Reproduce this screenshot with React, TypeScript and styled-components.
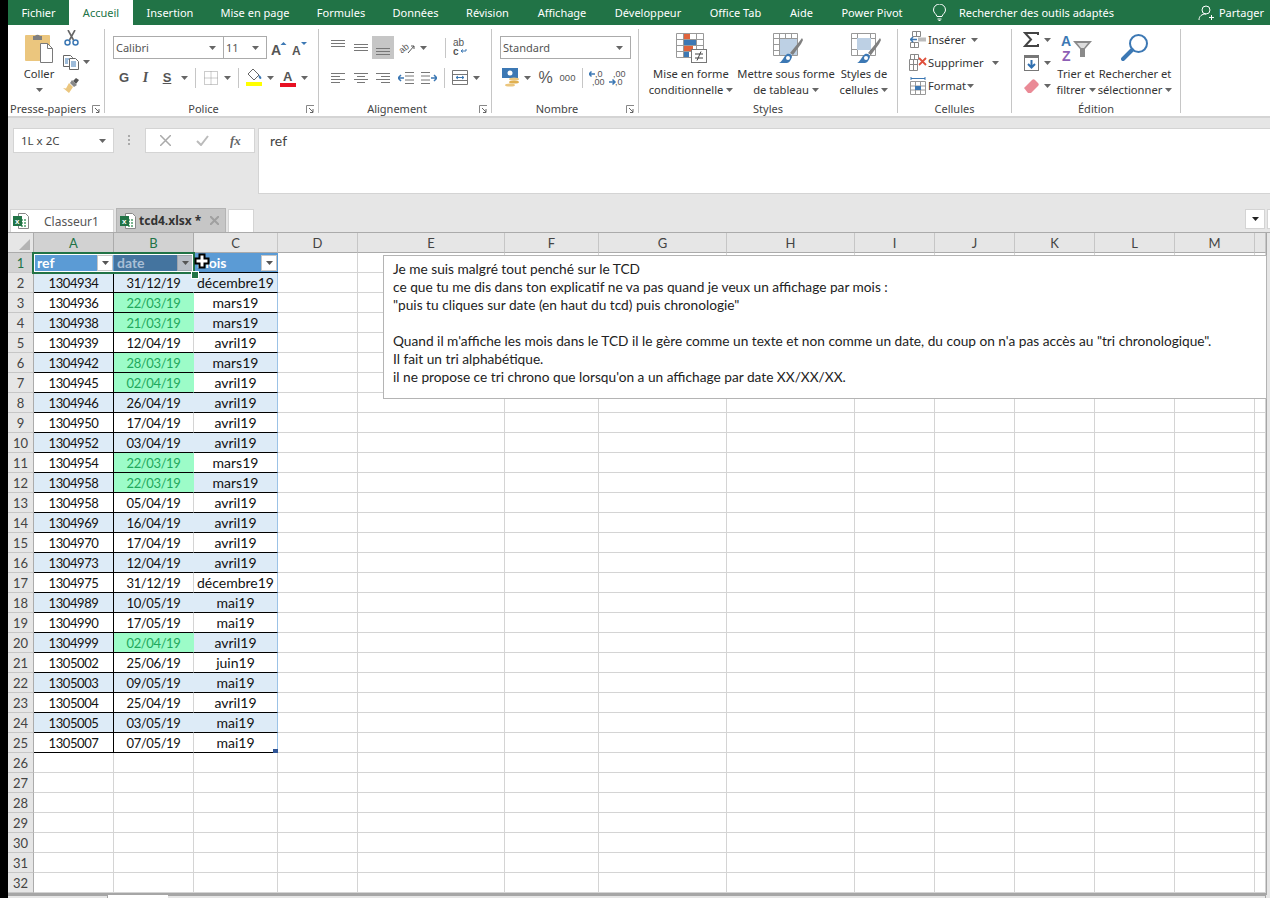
import React from "react";
import styled, { createGlobalStyle } from "styled-components";

const Global = createGlobalStyle`
  html, body { margin: 0; padding: 0; background: #000; }
  * { box-sizing: border-box; }
  #root { width: 1270px; height: 898px; overflow: hidden; }
`;

const UI = `"Noto Sans", "Open Sans", sans-serif`;
const CELL = `Lato, "Noto Sans", sans-serif`;
const COLS = "26px 80px 80px 84px 80px 147px 94px 128px 128px 80px 80px 80px 80px 80px 11px";

const Page = styled.div`
  display: flex;
  width: 1270px;
  height: 898px;
  background: #000;
`;
const Main = styled.div`
  width: 1262px;
  height: 898px;
  display: flex;
  flex-direction: column;
  background: #e6e6e6;
  position: relative;
  margin-left: 8px;
  font-family: ${UI};
`;

/* ---------- title bar ---------- */
const TitleBar = styled.div`
  height: 25px;
  flex: none;
  background: #217346;
  display: flex;
  align-items: stretch;
  color: #fff;
  font-size: 11px;
`;
const MenuTab = styled.div<{ $w: number; $active?: boolean }>`
  width: ${(p) => p.$w}px;
  flex: none;
  display: flex;
  align-items: center;
  justify-content: center;
  white-space: nowrap;
  padding-bottom: 1px;
  background: ${(p) => (p.$active ? "#fff" : "transparent")};
  color: ${(p) => (p.$active ? "#217346" : "#fff")};
`;
const TellMe = styled.div`
  display: flex;
  align-items: center;
  margin-left: 16px;
  gap: 13px;
  white-space: nowrap;
`;
const Share = styled.div`
  margin-left: auto;
  display: flex;
  align-items: center;
  gap: 5px;
  padding-right: 6px;
`;

/* ---------- ribbon ---------- */
const Ribbon = styled.div`
  height: 93px;
  flex: none;
  background: #fff;
  border-bottom: 2px solid #d4d4d4;
  display: flex;
  font-size: 11.2px;
  color: #333;
`;
const Group = styled.div<{ $w: number }>`
  width: ${(p) => p.$w}px;
  height: 84px;
  margin-top: 4px;
  flex: none;
  display: flex;
  flex-direction: column;
  border-right: 1px solid #c6c6c6;
`;
const GroupBody = styled.div<{ $pl?: number; $pt?: number }>`
  height: 72px;
  flex: none;
  display: flex;
  padding-left: ${(p) => p.$pl ?? 0}px;
  padding-top: ${(p) => p.$pt ?? 0}px;
`;
const Stack = styled.div`
  display: flex;
  flex-direction: column;
`;
const LabelRow = styled.div`
  height: 12px;
  line-height: 16px;
  display: flex;
  color: #444;
  font-size: 11px;
`;
const LabelText = styled.div`
  flex: 1;
  text-align: center;
  white-space: nowrap;
`;
const LauncherSlot = styled.div`
  width: 16px;
  display: flex;
  align-items: center;
  justify-content: center;
  height: 16px;
`;
const ToolRow = styled.div<{ $mt?: number }>`
  display: flex;
  align-items: center;
  margin-top: ${(p) => p.$mt ?? 0}px;
`;
const Slot = styled.div<{ $w: number; $h?: number; $active?: boolean }>`
  width: ${(p) => p.$w}px;
  height: ${(p) => p.$h ?? 23}px;
  flex: none;
  display: flex;
  align-items: center;
  justify-content: center;
  background: ${(p) => (p.$active ? "#c6c6c6" : "transparent")};
`;
const Sep = styled.div`
  width: 1px;
  height: 20px;
  background: #c6c6c6;
`;
const Combo = styled.div<{ $w: number }>`
  width: ${(p) => p.$w}px;
  height: 23px;
  flex: none;
  background: #fff;
  border: 1px solid #ababab;
  display: flex;
  align-items: center;
  justify-content: space-between;
  padding: 0 7px 0 2px;
  font-size: 11px;
  color: #555;
  & + & { border-left: none; }
`;
const BoldGlyph = styled.span<{ $color?: string; $italic?: boolean; $under?: boolean; $family?: string; $size?: number }>`
  font-family: ${(p) => p.$family ?? `"Liberation Sans", sans-serif`};
  font-size: ${(p) => p.$size ?? 13}px;
  font-weight: 700;
  color: ${(p) => p.$color ?? "#555"};
  font-style: ${(p) => (p.$italic ? "italic" : "normal")};
  text-decoration: ${(p) => (p.$under ? "underline" : "none")};
`;
const SmallNum = styled.span<{ $size?: number }>`
  font-size: ${(p) => p.$size ?? 9.5}px;
  color: #555;
  font-family: "Liberation Sans", sans-serif;
`;
const BigBtn = styled.div<{ $w: number }>`
  width: ${(p) => p.$w}px;
  flex: none;
  display: flex;
  flex-direction: column;
  align-items: center;
  line-height: 16px;
  white-space: nowrap;
`;
const BigIcon = styled.div<{ $shift?: number }>`
  height: 37px;
  flex: none;
  display: flex;
  align-items: center;
  justify-content: center;
  padding-left: ${(p) => p.$shift ?? 0}px;
`;
const CapLine = styled.div`
  display: flex;
  align-items: center;
  gap: 3px;
`;
const PasteCol = styled.div`
  width: 40px;
  margin-left: 11px;
  display: flex;
  flex-direction: column;
  align-items: center;
  line-height: 16px;
`;
const SmallCol = styled.div`
  margin-left: 3px;
  display: flex;
  flex-direction: column;
`;
const CellRow = styled.div`
  height: 23px;
  padding-bottom: 2px;
  display: flex;
  align-items: center;
`;
const CellLabel = styled.div<{ $w: number }>`
  width: ${(p) => p.$w}px;
  flex: none;
  white-space: nowrap;
`;

/* ---------- formula bar ---------- */
const FormulaBar = styled.div`
  height: 91px;
  flex: none;
  display: flex;
  padding: 11px 0 0 5px;
  align-items: flex-start;
  margin-top: -1px;
`;
const NameBox = styled.div`
  width: 101px;
  height: 25px;
  flex: none;
  background: #fff;
  border: 1px solid #d4d4d4;
  display: flex;
  align-items: center;
  justify-content: space-between;
  padding: 0 7px;
  font-size: 11.5px;
  color: #444;
`;
const Grip = styled.div`
  width: 31px;
  height: 25px;
  flex: none;
  display: flex;
  align-items: center;
  justify-content: center;
`;
const FxBox = styled.div`
  width: 110px;
  height: 25px;
  flex: none;
  background: #fff;
  border: 1px solid #d4d4d4;
  display: flex;
  align-items: center;
`;
const FormulaInput = styled.div`
  margin-left: 3px;
  flex: 1;
  height: 66px;
  background: #fff;
  border: 1px solid #d4d4d4;
  border-right: none;
  padding: 3px 0 0 11px;
  font-family: ${CELL};
  font-size: 14px;
  line-height: 18px;
  color: #444;
`;

/* ---------- workbook tabs ---------- */
const TabsBar = styled.div`
  height: 25px;
  flex: none;
  display: flex;
  align-items: flex-end;
  border-bottom: 1px solid #ababab;
  padding-left: 2px;
  font-size: 12px;
  position: relative;
`;
const BookTab = styled.div<{ $w: number; $active?: boolean }>`
  width: ${(p) => p.$w}px;
  height: ${(p) => (p.$active ? 24 : 23)}px;
  flex: none;
  margin-right: 2px;
  display: flex;
  align-items: center;
  gap: 3px;
  padding-left: ${(p) => (p.$active ? 3 : 2)}px;
  background: ${(p) => (p.$active ? "#c6c6c6" : "#fff")};
  border: 1px solid ${(p) => (p.$active ? "#b4b4b4" : "#d4d4d4")};
  border-bottom: none;
  white-space: nowrap;
  color: #555;
`;
const TabName = styled.span<{ $bold?: boolean; $ml?: number }>`
  font-weight: ${(p) => (p.$bold ? 700 : 400)};
  color: ${(p) => (p.$bold ? "#333" : "#555")};
  margin-left: ${(p) => p.$ml ?? 0}px;
`;
const CloseSlot = styled.span`
  margin-left: 6px;
  display: flex;
`;
const TabMenuBtn = styled.div`
  margin-left: auto;
  margin-right: 2px;
  margin-bottom: 3px;
  width: 20px;
  height: 20px;
  background: #fff;
  border: 1px solid #d4d4d4;
  display: flex;
  align-items: center;
  justify-content: center;
`;
const TabEdge = styled.div`
  width: 3px;
  height: 20px;
  margin-bottom: 3px;
  background: #fff;
  border: 1px solid #d4d4d4;
  border-right: none;
`;

/* ---------- sheet ---------- */
const Sheet = styled.div`
  flex: 1;
  position: relative;
  overflow: hidden;
`;
const GridFrame = styled.div`
  width: 1259px;
  height: 662px;
  overflow: hidden;
  background: #fff;
  border-right: 1px solid #a6a6a6;
  border-bottom: 2px solid #a6a6a6;
`;
const GridRow = styled.div<{ $h?: number }>`
  display: grid;
  grid-template-columns: ${COLS};
  height: ${(p) => p.$h ?? 20}px;
`;
const ColHead = styled.div<{ $sel?: boolean }>`
  background: ${(p) => (p.$sel ? "#d2d2d2" : "#e6e6e6")};
  color: ${(p) => (p.$sel ? "#217346" : "#444")};
  border-right: 1px solid ${(p) => (p.$sel ? "#ababab" : "#c6c6c6")};
  border-bottom: 1px solid ${(p) => (p.$sel ? "#217346" : "#ababab")};
  font-family: ${CELL};
  font-size: 13px;
  display: flex;
  align-items: center;
  justify-content: center;
`;
const Corner = styled.div`
  background: #e6e6e6;
  border-right: 1px solid #ababab;
  border-bottom: 1px solid #ababab;
  display: flex;
  align-items: flex-end;
  justify-content: flex-end;
  padding: 0 3px 2px 0;
`;
const RowHead = styled.div<{ $sel?: boolean }>`
  background: ${(p) => (p.$sel ? "#d2d2d2" : "#e6e6e6")};
  color: ${(p) => (p.$sel ? "#217346" : "#444")};
  border-right: 1px solid ${(p) => (p.$sel ? "#217346" : "#ababab")};
  border-bottom: 1px solid #c6c6c6;
  font-family: ${CELL};
  font-size: 13px;
  display: flex;
  align-items: center;
  justify-content: center;
`;
const Blank = styled.div`
  border-right: 1px solid #d4d4d4;
  border-bottom: 1px solid #d4d4d4;
`;
const TableCell = styled.div<{ $bg: string; $right: string; $color?: string; $text?: boolean }>`
  background: ${(p) => p.$bg};
  color: ${(p) => p.$color ?? "#111"};
  border-right: 1px solid ${(p) => p.$right};
  border-bottom: 1px solid #000;
  font-family: ${CELL};
  font-size: ${(p) => (p.$text ? 14 : 13)}px;
  letter-spacing: ${(p) => (p.$text ? 0 : -0.4)}px;
  display: flex;
  align-items: center;
  justify-content: center;
  white-space: nowrap;
`;
const HeadCell = styled.div<{ $bg: string; $color: string }>`
  background: ${(p) => p.$bg};
  color: ${(p) => p.$color};
  border-bottom: 1px solid #000;
  font-family: ${CELL};
  font-size: 14px;
  font-weight: 700;
  display: flex;
  align-items: center;
  justify-content: space-between;
  padding: 0 1px 0 3px;
  position: relative;
`;
const FilterBtn = styled.div<{ $on?: boolean }>`
  width: 16px;
  height: 16px;
  background: ${(p) => (p.$on ? "#b8bec6" : "#fff")};
  border: 1px solid ${(p) => (p.$on ? "#a0a6ae" : "#c6c6c6")};
  display: flex;
  align-items: center;
  justify-content: center;
`;
const Note = styled.div`
  position: absolute;
  left: 375px;
  top: 22px;
  width: 884px;
  height: 144px;
  background: #fff;
  border: 1px solid #b4b4b4;
  padding: 4px 0 0 9px;
  font-family: ${CELL};
  font-size: 13.7px;
  line-height: 18px;
  color: #222;
  white-space: pre;
`;
const Selection = styled.div`
  position: absolute;
  left: 24px;
  top: 19px;
  width: 163px;
  height: 22px;
  border: 2px solid #217346;
  box-shadow: inset 0 0 0 1px #fff;
  pointer-events: none;
`;
const Handle = styled.div`
  position: absolute;
  left: 183px;
  top: 38px;
  width: 6px;
  height: 6px;
  background: #217346;
  border: 1px solid #fff;
  box-sizing: content-box;
`;
const Pointer = styled.svg`
  position: absolute;
  left: 186px;
  top: 20px;
`;
const ResizeMark = styled.div`
  position: absolute;
  left: 265px;
  top: 516px;
  width: 5px;
  height: 4px;
  background: #2f5597;
`;
const SheetBar = styled.div`
  height: 3px;
  flex: none;
  display: flex;
`;
const SheetTabOff = styled.div<{ $w: number }>`
  width: ${(p) => p.$w}px;
  background: #e6e6e6;
  border-top: 1px solid #a6a6a6;
  border-right: 1px solid #a6a6a6;
`;
const SheetTabOn = styled.div`
  width: 60px;
  background: #fff;
`;
const SheetFill = styled.div`
  flex: 1;
  background: #e6e6e6;
`;

/* ---------- icons ---------- */
const Caret = ({ c = "#666" }: { c?: string }) => (
  <svg width="7" height="4" viewBox="0 0 7 4"><path d="M0 0h7L3.5 4z" fill={c} /></svg>
);
const Launcher = () => (
  <svg width="9" height="9" viewBox="0 0 9 9" fill="none">
    <path d="M.5 8V.5H8" stroke="#888" />
    <path d="M3 3l4 4M7 4v3.5H4" stroke="#666" />
  </svg>
);
const Paste = () => (
  <svg width="29" height="31" viewBox="0 0 29 31">
    <rect x="0" y="3" width="25" height="26" rx="1" fill="#ebc67e" />
    <path d="M8 4h2a3 3 0 0 1 5 0h2v4H8z" fill="#7f7f7f" />
    <path d="M15.5 11.5h7l5 5v14h-12z" fill="#fff" stroke="#7a7a7a" />
    <path d="M22.5 11.5v5h5" fill="none" stroke="#7a7a7a" />
  </svg>
);
const Cut = () => (
  <svg width="15" height="16" viewBox="0 0 15 16" fill="none">
    <path d="M4 0l5.5 10M11 0L5.5 10" stroke="#666" strokeWidth="1.6" />
    <circle cx="3.5" cy="12.5" r="2.5" stroke="#3c78b4" strokeWidth="1.5" />
    <circle cx="11.5" cy="12.5" r="2.5" stroke="#3c78b4" strokeWidth="1.5" />
  </svg>
);
const Copy = () => (
  <svg width="16" height="15" viewBox="0 0 16 15" fill="#fff">
    <path d="M.5.5h7l2 2v9h-9z" stroke="#666" />
    <path d="M6.5 3.5h6l3 3v8h-9z" stroke="#666" />
    <path d="M2 4h4M2 6h3M2 8h3M8 7h5M8 9h5M8 11h5" stroke="#3c78b4" />
  </svg>
);
const Brush = () => (
  <svg width="17" height="16" viewBox="0 0 17 16">
    <path d="M10 4l3-3 3 2-3 4z" fill="#555" />
    <path d="M9 3l5 5-3 2-4-4z" fill="#888" />
    <path d="M6 6l4 4-4 6-6-5 3 .5z" fill="#ebc67e" />
  </svg>
);
const GrowA = ({ down }: { down?: boolean }) => (
  <svg width="16" height="18" viewBox="0 0 16 18">
    <text x="0" y="16" fontFamily="Liberation Sans" fontSize={down ? 12 : 14} fontWeight="700" fill="#555">A</text>
    <path d={down ? "M9 3h6l-3 3z" : "M9.5 6l3-3 3 3z"} fill="#3c78b4" />
  </svg>
);
const Borders = () => (
  <svg width="14" height="14" viewBox="0 0 14 14" fill="none" stroke="#999" strokeDasharray="1 1">
    <path d="M.5.5h13v13H.5zM7 .5v13M.5 7h13" />
  </svg>
);
const FillColor = () => (
  <svg width="17" height="19" viewBox="0 0 17 19">
    <path d="M7 1l6 6-5 5-6-6z" fill="#fff" stroke="#666" />
    <path d="M13 7c2 1 3 3 2 4-2 0-3-2-2-4z" fill="#3c78b4" />
    <rect y="14" width="16" height="4" fill="#ffff00" />
  </svg>
);
const FontColor = () => (
  <svg width="16" height="20" viewBox="0 0 16 20">
    <text x="3" y="13" fontFamily="Liberation Sans" fontSize="13" fontWeight="700" fill="#555">A</text>
    <rect y="15" width="16" height="4" fill="#e81123" />
  </svg>
);
const Lines = ({ kind }: { kind: "l" | "c" | "r" | "t" | "m" | "b" }) => {
  const top = kind === "t" ? 0 : kind === "m" ? 4 : kind === "b" ? 8 : 0;
  if (kind === "t" || kind === "m" || kind === "b")
    return (
      <svg width="14" height="16" viewBox="0 0 14 16" stroke="#777">
        <path d={`M0 ${top + 0.5}h14M0 ${top + 3.5}h14M0 ${top + 6.5}h14`} />
      </svg>
    );
  const d =
    kind === "l"
      ? "M0 .5h14M0 3.5h9M0 6.5h14M0 9.5h9"
      : kind === "c"
      ? "M0 .5h14M3 3.5h8M0 6.5h14M3 9.5h8"
      : "M0 .5h14M5 3.5h9M0 6.5h14M5 9.5h9";
  return <svg width="14" height="10" viewBox="0 0 14 10" stroke="#777"><path d={d} /></svg>;
};
const Orient = () => (
  <svg width="18" height="18" viewBox="0 0 18 18">
    <text x="1" y="13" fontFamily="Liberation Sans" fontSize="9" transform="rotate(-40 5 10)" fill="#555">ab</text>
    <path d="M10 14L16 7M13 7h3v3" stroke="#555" fill="none" />
  </svg>
);
const Wrap = () => (
  <svg width="16" height="21" viewBox="0 0 16 21">
    <text x="0" y="9" fontFamily="Liberation Sans" fontSize="10" fill="#555">ab</text>
    <text x="0" y="18" fontFamily="Liberation Sans" fontSize="10" fontWeight="700" fill="#555">c</text>
    <path d="M13 12v2H8M10 12.500L8 14l2 1.500" stroke="#3c78b4" fill="none" />
  </svg>
);
const Indent = ({ inc }: { inc?: boolean }) => (
  <svg width="16" height="12" viewBox="0 0 16 12" fill="none">
    <path d={inc ? "M0 .5h9M0 11.5h9M0 4h9M0 8h9" : "M7 .5h9M7 4h9M7 8h9M7 11.5h9"} stroke="#777" />
    <path d={inc ? "M10 6h6M13 3l3 3-3 3" : "M0 6h6M3 3L0 6l3 3"} stroke="#3c78b4" strokeWidth="1.5" />
  </svg>
);
const Merge = () => (
  <svg width="16" height="15" viewBox="0 0 16 15" fill="#fff" stroke="#777">
    <path d="M.5.5h15v14H.5zM.5 4.5h15M.5 10.5h15" />
    <path d="M4 7.5h8M4 7.5l2-1.5M4 7.5L6 9M12 7.5L10 6M12 7.5L10 9" stroke="#3c78b4" fill="none" />
  </svg>
);
const Currency = () => (
  <svg width="18" height="19" viewBox="0 0 18 19">
    <rect x="0" y="0" width="16" height="10" fill="#3c78b4" />
    <circle cx="8" cy="5" r="2.5" fill="#fff" />
    <ellipse cx="12" cy="11" rx="5" ry="1.6" fill="#ebc67e" />
    <ellipse cx="12" cy="14" rx="5" ry="1.6" fill="#e0b050" />
    <ellipse cx="8" cy="17" rx="5" ry="1.6" fill="#ebc67e" />
  </svg>
);
const DecIcon = ({ more }: { more?: boolean }) => (
  <svg width="18" height="19" viewBox="0 0 18 19">
    <text x={more ? 6 : 4} y="9" fontFamily="Liberation Sans" fontSize="9" fill="#555">{more ? ",0" : ",00"}</text>
    <text x={more ? 3 : 6} y="17" fontFamily="Liberation Sans" fontSize="9" fill="#555">{more ? ",00" : ",0"}</text>
    {more ? (
      <path d="M0 6h6M2.500 3.500L0 6l2.500 2.500" stroke="#3c78b4" fill="none" strokeWidth="1.5" />
    ) : (
      <path d="M0 14h6M3.500 11.500L6 14l-2.500 2.500" stroke="#3c78b4" fill="none" strokeWidth="1.5" />
    )}
  </svg>
);
const CondFormat = () => (
  <svg width="31" height="30" viewBox="0 0 31 30">
    <path d="M.5.5h27v24H.5zM.5 6.5h27M.5 12.5h27M.5 18.5h27M7.5.5v24M20.5.5v24" fill="#fff" stroke="#999" />
    <rect x="8" y="1" width="6" height="5" fill="#e0643c" />
    <rect x="8" y="7" width="12" height="5" fill="#3c78b4" />
    <rect x="8" y="13" width="9" height="5" fill="#e0643c" />
    <rect x="8" y="19" width="5" height="5" fill="#3c78b4" />
    <rect x="15.5" y="16.5" width="15" height="13" fill="#fff" stroke="#777" />
    <path d="M19 21h8M19 25h8M25 18.5l-4 9" stroke="#444" />
  </svg>
);
const BrushTip = () => (
  <>
    <path d="M17 20l9-11 3-4 1 2-2 4-8 11z" fill="#808080" />
    <path d="M6 30c3-1 5-7 8-9 3-1 5 1 5 3-1 3-3 6-5 6z" fill="#3c78b4" />
    <circle cx="15" cy="25" r="2" fill="#fff" />
  </>
);
const TableFormat = () => (
  <svg width="30" height="30" viewBox="0 0 30 30">
    <path d="M.5.5h24v22H.5zM.5 5.5h24M.5 11.5h24M.5 17.5h24M6.5.5v22M12.5.5v22M18.5.5v22" fill="#fff" stroke="#999" />
    <rect x="7" y="6" width="17" height="16" fill="#bdd0e4" />
    <BrushTip />
  </svg>
);
const CellStyles = () => (
  <svg width="30" height="30" viewBox="0 0 30 30">
    <path d="M.5.5h24v22H.5zM.5 5.5h24M.5 16.5h24M6.5.5v22M19.5.5v22" fill="#fff" stroke="#999" />
    <rect x="6" y="5" width="14" height="12" fill="#bdd0e4" />
    <BrushTip />
  </svg>
);
const InsertCells = () => (
  <svg width="16" height="17" viewBox="0 0 16 17" fill="none">
    <path d="M2.5.5h8v5h-8zM6.5.5v5M.5 11.5h8v5h-8zM4.5 11.5v5" stroke="#888" />
    <rect x="8" y="6.5" width="8" height="4" fill="#bbb" />
    <path d="M0 8.5h7M3 6L.5 8.5 3 11" stroke="#3c78b4" strokeWidth="1.5" />
  </svg>
);
const DeleteCells = () => (
  <svg width="18" height="17" viewBox="0 0 18 17" fill="none">
    <path d="M1.5.5h8v5h-8zM5.5.5v5M.5 5.5h8v5h-8zM4.5 5.5v5M.5 10.5h8v6h-8zM4.5 10.5v6" stroke="#888" />
    <path d="M10 4l7 7M17 4l-7 7" stroke="#e0503c" strokeWidth="1.8" />
  </svg>
);
const FormatCells = () => (
  <svg width="16" height="18" viewBox="0 0 16 18" fill="none">
    <path d="M1 1.5h14M1 0v3M15 0v3" stroke="#3c78b4" />
    <path d="M.5 4.5h15v13H.5zM.5 9h15M.5 13h15M5.500 4.500v13M10.500 4.500v13" stroke="#999" />
    <rect x="5" y="9" width="6" height="4" fill="#3c78b4" />
  </svg>
);
const Sigma = () => (
  <svg width="16" height="15" viewBox="0 0 16 15" fill="none">
    <path d="M15 3V1H2l6 6.500L2 14h13v-2" stroke="#444" strokeWidth="2" />
  </svg>
);
const FillDown = () => (
  <svg width="15" height="16" viewBox="0 0 15 16">
    <rect x=".5" y=".5" width="14" height="15" fill="#fff" stroke="#777" />
    <rect x="0" y="0" width="15" height="3" fill="#777" />
    <path d="M7.500 5v7M4 9l3.500 3.500L11 9" stroke="#2f6fb0" strokeWidth="2" fill="none" />
  </svg>
);
const Eraser = () => (
  <svg width="15" height="14" viewBox="0 0 15 14">
    <path d="M0 9l8-8c1-1 2-1 3 0l3 3c1 1 1 2 0 3l-7 7H4z" fill="#ea8a96" />
  </svg>
);
const SortFilter = () => (
  <svg width="31" height="30" viewBox="0 0 31 30">
    <text x="0" y="13" fontFamily="Liberation Sans" fontSize="14" fontWeight="700" fill="#3c78b4">A</text>
    <text x="1" y="28" fontFamily="Liberation Sans" fontSize="14" fontWeight="700" fill="#8e5fb5">Z</text>
    <path d="M12 8h19l-7 8v8h-5v-8z" fill="#8a8a8a" />
    <path d="M16 10h11l-4 5h-3z" fill="#dcdcdc" />
  </svg>
);
const Search = () => (
  <svg width="28" height="30" viewBox="0 0 28 30" fill="none">
    <circle cx="17.500" cy="10.500" r="8.500" stroke="#3c78b4" strokeWidth="2" />
    <path d="M11 17L2 26" stroke="#3c78b4" strokeWidth="4" strokeLinecap="round" />
  </svg>
);
const Bulb = () => (
  <svg width="13" height="17" viewBox="0 0 13 17" fill="none" stroke="#fff">
    <path d="M4 12.500C3.500 10 .5 9 .5 6a6 6 0 0 1 12 0c0 3-3 4-3.500 6.500zM4.500 15h4M5.500 16.500h2" />
  </svg>
);
const Person = () => (
  <svg width="16" height="16" viewBox="0 0 16 16" fill="none" stroke="#fff">
    <circle cx="8" cy="5" r="4" />
    <path d="M1 15c0-4 3-6 7-6M11 12.500h5M13.500 10v5" />
  </svg>
);
const Dots = () => (
  <svg width="3" height="11" viewBox="0 0 3 11" fill="#aaa">
    <rect y="0" width="2" height="2" /><rect y="4" width="2" height="2" /><rect y="8" width="2" height="2" />
  </svg>
);
const XIcon = () => (
  <svg width="11" height="11" viewBox="0 0 11 11" stroke="#aaa" strokeWidth="1.5"><path d="M0 0l11 11M11 0L0 11" /></svg>
);
const CheckIcon = () => (
  <svg width="13" height="11" viewBox="0 0 13 11" fill="none" stroke="#bbb" strokeWidth="2"><path d="M1 6l4 4 7-9" /></svg>
);
const Fx = () => (
  <svg width="14" height="16" viewBox="0 0 14 16">
    <text x="0" y="12" fontFamily="Liberation Serif" fontSize="13" fontStyle="italic" fontWeight="700" fill="#666">fx</text>
  </svg>
);
const XlsIcon = () => (
  <svg width="16" height="16" viewBox="0 0 16 16">
    <path d="M5.500.500h7l3 3v12h-10z" fill="#fff" stroke="#888" />
    <path d="M8 6h2v2H8zM11 6h2v2h-2zM8 9h2v2H8zM11 9h2v2h-2zM8 12h2v2H8zM11 12h2v2h-2z" fill="#7ab58f" />
    <rect x="0" y="3" width="9" height="10" fill="#217346" />
    <text x="2" y="11" fontFamily="Liberation Sans" fontSize="8" fontWeight="700" fill="#fff">x</text>
  </svg>
);
const CloseX = () => (
  <svg width="9" height="9" viewBox="0 0 9 9" stroke="#a0a0a0" strokeWidth="2"><path d="M0 0l9 9M9 0L0 9" /></svg>
);

/* ---------- data ---------- */
type Row = [string, string, string, boolean];
const DATA: Row[] = [
  ["1304934", "31/12/19", "décembre19", false],
  ["1304936", "22/03/19", "mars19", true],
  ["1304938", "21/03/19", "mars19", true],
  ["1304939", "12/04/19", "avril19", false],
  ["1304942", "28/03/19", "mars19", true],
  ["1304945", "02/04/19", "avril19", true],
  ["1304946", "26/04/19", "avril19", false],
  ["1304950", "17/04/19", "avril19", false],
  ["1304952", "03/04/19", "avril19", false],
  ["1304954", "22/03/19", "mars19", true],
  ["1304958", "22/03/19", "mars19", true],
  ["1304958", "05/04/19", "avril19", false],
  ["1304969", "16/04/19", "avril19", false],
  ["1304970", "17/04/19", "avril19", false],
  ["1304973", "12/04/19", "avril19", false],
  ["1304975", "31/12/19", "décembre19", false],
  ["1304989", "10/05/19", "mai19", false],
  ["1304990", "17/05/19", "mai19", false],
  ["1304999", "02/04/19", "avril19", true],
  ["1305002", "25/06/19", "juin19", false],
  ["1305003", "09/05/19", "mai19", false],
  ["1305004", "25/04/19", "avril19", false],
  ["1305005", "03/05/19", "mai19", false],
  ["1305007", "07/05/19", "mai19", false],
];
const LETTERS = ["A", "B", "C", "D", "E", "F", "G", "H", "I", "J", "K", "L", "M", ""];
const MENU: [string, number, boolean?][] = [
  ["Fichier", 61], ["Accueil", 64, true], ["Insertion", 74], ["Mise en page", 96], ["Formules", 76],
  ["Données", 73], ["Révision", 71], ["Affichage", 78], ["Développeur", 94], ["Office Tab", 81],
  ["Aide", 51], ["Power Pivot", 90],
];
const NOTE = `Je me suis malgré tout penché sur le TCD
ce que tu me dis dans ton explicatif ne va pas quand je veux un affichage par mois :
"puis tu cliques sur date (en haut du tcd) puis chronologie"

Quand il m'affiche les mois dans le TCD il le gère comme un texte et non comme un date, du coup on n'a pas accès au "tri chronologique".
Il fait un tri alphabétique.
il ne propose ce tri chrono que lorsqu'on a un affichage par date XX/XX/XX.`;

const BlankCols = ({ from }: { from: number }) => (
  <>
    {LETTERS.slice(from).map((l, i) => (
      <Blank key={l + i} />
    ))}
  </>
);

const DataRow = ({ r, n }: { r: Row; n: number }) => {
  const band = n % 2 === 0 ? "#ddebf7" : "#fff";
  const green = "#9cfcc8";
  const bBg = r[3] ? green : band;
  const bRight = r[3] ? green : n % 2 === 0 ? band : "#d4d4d4";
  return (
    <GridRow>
      <RowHead>{n}</RowHead>
      <TableCell $bg={band} $right="#000">{r[0]}</TableCell>
      <TableCell $bg={bBg} $right={bRight} $color={r[3] ? "#1ea85c" : undefined}>{r[1]}</TableCell>
      <TableCell $bg={band} $right="#9bc2e6" $text>{r[2]}</TableCell>
      <BlankCols from={3} />
    </GridRow>
  );
};

const FilterArrow = () => <Caret c="#555" />;

export default function App() {
  return (
    <Page>
      <Global />
      <Main>
        <TitleBar>
          {MENU.map(([t, w, a]) => (
            <MenuTab key={t} $w={w} $active={a}>{t}</MenuTab>
          ))}
          <TellMe><Bulb />Rechercher des outils adaptés</TellMe>
          <Share><Person />Partager</Share>
        </TitleBar>

        <Ribbon>
          <Group $w={97}>
            <GroupBody>
              <PasteCol>
                <BigIcon><Paste /></BigIcon>
                <span>Coller</span>
                <Slot $w={10} $h={16}><Caret /></Slot>
              </PasteCol>
              <SmallCol>
                <Slot $w={18} $h={18}><Cut /></Slot>
                <ToolRow>
                  <Slot $w={18} $h={30}><Copy /></Slot>
                  <Slot $w={12} $h={30}><Caret /></Slot>
                </ToolRow>
                <Slot $w={18} $h={16}><Brush /></Slot>
              </SmallCol>
            </GroupBody>
            <LabelRow><LabelText>Presse-papiers</LabelText><LauncherSlot><Launcher /></LauncherSlot></LabelRow>
          </Group>

          <Group $w={214}>
            <GroupBody $pl={8} $pt={7}>
              <Stack>
                <ToolRow>
                  <Combo $w={111}><span>Calibri</span><Caret /></Combo>
                  <Combo $w={43}><span>11</span><Caret /></Combo>
                  <Slot $w={23}><GrowA /></Slot>
                  <Slot $w={19}><GrowA down /></Slot>
                </ToolRow>
                <ToolRow $mt={7}>
                  <Slot $w={22}><BoldGlyph>G</BoldGlyph></Slot>
                  <Slot $w={21}><BoldGlyph $italic $family={`"Liberation Serif", serif`} $size={14}>I</BoldGlyph></Slot>
                  <Slot $w={22}><BoldGlyph $under>S</BoldGlyph></Slot>
                  <Slot $w={12}><Caret /></Slot>
                  <Slot $w={10}><Sep /></Slot>
                  <Slot $w={22}><Borders /></Slot>
                  <Slot $w={10}><Caret /></Slot>
                  <Slot $w={12}><Sep /></Slot>
                  <Slot $w={20}><FillColor /></Slot>
                  <Slot $w={12}><Caret /></Slot>
                  <Slot $w={24}><FontColor /></Slot>
                  <Slot $w={8}><Caret /></Slot>
                </ToolRow>
              </Stack>
            </GroupBody>
            <LabelRow><LabelText>Police</LabelText><LauncherSlot><Launcher /></LauncherSlot></LabelRow>
          </Group>

          <Group $w={173}>
            <GroupBody $pl={7} $pt={7}>
              <Stack>
                <ToolRow>
                  <Slot $w={24}><Lines kind="t" /></Slot>
                  <Slot $w={22}><Lines kind="m" /></Slot>
                  <Slot $w={22} $active><Lines kind="b" /></Slot>
                  <Slot $w={25}><Orient /></Slot>
                  <Slot $w={8}><Caret /></Slot>
                  <Slot $w={14} />
                  <Slot $w={8}><Sep /></Slot>
                  <Slot $w={24}><Wrap /></Slot>
                </ToolRow>
                <ToolRow $mt={7}>
                  <Slot $w={24}><Lines kind="l" /></Slot>
                  <Slot $w={22}><Lines kind="c" /></Slot>
                  <Slot $w={22}><Lines kind="r" /></Slot>
                  <Slot $w={24}><Indent /></Slot>
                  <Slot $w={22}><Indent inc /></Slot>
                  <Slot $w={8}><Sep /></Slot>
                  <Slot $w={24}><Merge /></Slot>
                  <Slot $w={8}><Caret /></Slot>
                </ToolRow>
              </Stack>
            </GroupBody>
            <LabelRow><LabelText>Alignement</LabelText><LauncherSlot><Launcher /></LauncherSlot></LabelRow>
          </Group>

          <Group $w={147}>
            <GroupBody $pl={8} $pt={7}>
              <Stack>
                <Combo $w={131}><span>Standard</span><Caret /></Combo>
                <ToolRow $mt={7}>
                  <Slot $w={22}><Currency /></Slot>
                  <Slot $w={10}><Caret /></Slot>
                  <Slot $w={27}><SmallNum $size={16}>%</SmallNum></Slot>
                  <Slot $w={17}><SmallNum>000</SmallNum></Slot>
                  <Slot $w={12}><Sep /></Slot>
                  <Slot $w={20}><DecIcon more /></Slot>
                  <Slot $w={20}><DecIcon /></Slot>
                </ToolRow>
              </Stack>
            </GroupBody>
            <LabelRow><LabelText>Nombre</LabelText><LauncherSlot><Launcher /></LauncherSlot></LabelRow>
          </Group>

          <Group $w={259}>
            <GroupBody $pl={2}>
              <BigBtn $w={100}>
                <BigIcon><CondFormat /></BigIcon>
                <span>Mise en forme</span>
                <CapLine>conditionnelle<Caret /></CapLine>
              </BigBtn>
              <BigBtn $w={90}>
                <BigIcon $shift={4}><TableFormat /></BigIcon>
                <span>Mettre sous forme</span>
                <CapLine>de tableau<Caret /></CapLine>
              </BigBtn>
              <BigBtn $w={66}>
                <BigIcon $shift={4}><CellStyles /></BigIcon>
                <span>Styles de</span>
                <CapLine>cellules<Caret /></CapLine>
              </BigBtn>
            </GroupBody>
            <LabelRow><LabelText>Styles</LabelText></LabelRow>
          </Group>

          <Group $w={114}>
            <GroupBody $pl={9}>
              <Stack>
                <CellRow><Slot $w={21}><InsertCells /></Slot><CellLabel $w={43}>Insérer</CellLabel><Caret /></CellRow>
                <CellRow><Slot $w={21}><DeleteCells /></Slot><CellLabel $w={64}>Supprimer</CellLabel><Caret /></CellRow>
                <CellRow><Slot $w={21}><FormatCells /></Slot><CellLabel $w={39}>Format</CellLabel><Caret /></CellRow>
              </Stack>
            </GroupBody>
            <LabelRow><LabelText>Cellules</LabelText></LabelRow>
          </Group>

          <Group $w={169}>
            <GroupBody $pl={10}>
              <Stack>
                <CellRow><Slot $w={18}><Sigma /></Slot><Slot $w={14}><Caret /></Slot></CellRow>
                <CellRow><Slot $w={18}><FillDown /></Slot><Slot $w={14}><Caret /></Slot></CellRow>
                <CellRow><Slot $w={18}><Eraser /></Slot><Slot $w={14}><Caret /></Slot></CellRow>
              </Stack>
              <BigBtn $w={44}>
                <BigIcon><SortFilter /></BigIcon>
                <span>Trier et</span>
                <CapLine>filtrer<Caret /></CapLine>
              </BigBtn>
              <BigBtn $w={74}>
                <BigIcon><Search /></BigIcon>
                <span>Rechercher et</span>
                <CapLine>sélectionner<Caret /></CapLine>
              </BigBtn>
            </GroupBody>
            <LabelRow><LabelText>Édition</LabelText></LabelRow>
          </Group>
        </Ribbon>

        <FormulaBar>
          <NameBox><span>1L x 2C</span><Caret /></NameBox>
          <Grip><Dots /></Grip>
          <FxBox>
            <Slot $w={38}><XIcon /></Slot>
            <Slot $w={36}><CheckIcon /></Slot>
            <Slot $w={34}><Fx /></Slot>
          </FxBox>
          <FormulaInput>ref</FormulaInput>
        </FormulaBar>

        <TabsBar>
          <BookTab $w={104}><XlsIcon /><TabName $ml={12}>Classeur1</TabName></BookTab>
          <BookTab $w={110} $active><XlsIcon /><TabName $bold>tcd4.xlsx *</TabName><CloseSlot><CloseX /></CloseSlot></BookTab>
          <BookTab $w={26} />
          <TabMenuBtn><Caret c="#222" /></TabMenuBtn>
          <TabEdge />
        </TabsBar>

        <Sheet>
          <GridFrame>
            <GridRow>
              <Corner>
                <svg width="11" height="11" viewBox="0 0 11 11"><path d="M11 0v11H0z" fill="#b4b4b4" /></svg>
              </Corner>
              {LETTERS.map((l, i) => (
                <ColHead key={l + i} $sel={i < 2}>{l}</ColHead>
              ))}
            </GridRow>
            <GridRow>
              <RowHead $sel>1</RowHead>
              <HeadCell $bg="#5b9bd5" $color="#fff">ref<FilterBtn><FilterArrow /></FilterBtn></HeadCell>
              <HeadCell $bg="#44749f" $color="#a9bfd6">date<FilterBtn $on><FilterArrow /></FilterBtn></HeadCell>
              <HeadCell $bg="#5b9bd5" $color="#fff">mois<FilterBtn><FilterArrow /></FilterBtn></HeadCell>
              <BlankCols from={3} />
            </GridRow>
            {DATA.map((r, i) => (
              <DataRow key={i} r={r} n={i + 2} />
            ))}
            {Array.from({ length: 8 }, (_, i) => (
              <GridRow key={i}>
                <RowHead>{i + 26 <= 32 ? i + 26 : ""}</RowHead>
                <BlankCols from={0} />
              </GridRow>
            ))}
          </GridFrame>
          <Note>{NOTE}</Note>
          <Selection />
          <Handle />
          <ResizeMark />
          <Pointer width="16" height="16" viewBox="0 0 16 16">
            <path d="M5.500 1.500h5v4h4v5h-4v4h-5v-4h-4v-5h4z" fill="#fff" stroke="#000" strokeWidth="2" />
          </Pointer>
          <SheetBar>
            <SheetTabOff $w={100} />
            <SheetTabOn />
            <SheetTabOff $w={1098} />
            <SheetFill />
          </SheetBar>
        </Sheet>
      </Main>
    </Page>
  );
}
